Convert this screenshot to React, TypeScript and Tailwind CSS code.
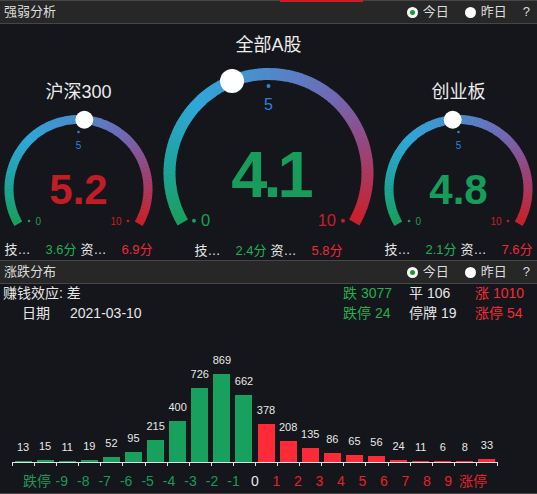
import React from 'react';

type Rgb = [number, number, number];

// arc colour stops, 0 = left end, 1 = right end
const STOPS: [number, Rgb][] = [
  [0, [0x18, 0xa0, 0x5a]],
  [0.15, [0x1f, 0xa3, 0xa0]],
  [0.3, [0x2e, 0xa8, 0xd8]],
  [0.5, [0x4d, 0x8b, 0xcc]],
  [0.68, [0x74, 0x66, 0xb2]],
  [0.82, [0x9a, 0x44, 0x78]],
  [1, [0xcc, 0x1f, 0x28]],
];

const colorAt = (t: number) => {
  for (let i = 1; i < STOPS.length; i++) {
    const [t1, c1] = STOPS[i];
    const [t0, c0] = STOPS[i - 1];
    if (t <= t1) {
      const k = (t - t0) / (t1 - t0);
      const c = c0.map((v, j) => Math.round(v + (c1[j] - v) * k));
      return `rgb(${c[0]},${c[1]},${c[2]})`;
    }
  }
  return 'rgb(204,31,40)';
};

const polar = (cx: number, cy: number, r: number, deg: number) => {
  const rad = (deg * Math.PI) / 180;
  return [cx + r * Math.cos(rad), cy - r * Math.sin(rad)];
};

const SMALL = {
  r: 69.5, sw: 9, knobR: 9, valueSize: 42, valueDy: 15, valueSpacing: 0,
  tickDot: 57, tickDotR: 1.3, tickTextDy: -40, tickFont: 10,
  endFont: 10, endDotX: 49.5, endDotDy: 32, endTextX: 43, endTextDy: 35.5,
};
const BIG = {
  r: 99, sw: 12, knobR: 12, valueSize: 65, valueDy: 23.5, valueSpacing: -4,
  tickDot: 87, tickDotR: 2, tickTextDy: -63, tickFont: 16,
  endFont: 16.5, endDotX: 74.5, endDotDy: 47.7, endTextX: 67.5, endTextDy: 53,
};

interface GaugeProps {
  width: number;
  height: number;
  cy: number;
  value: number;
  big?: boolean;
}

const Gauge: React.FC<GaugeProps> = ({ width, height, cy, value, big }) => {
  const g = big ? BIG : SMALL;
  const cx = width / 2;
  const N = 90;
  const segs = [];
  for (let i = 0; i < N; i++) {
    const a0 = 210 - (240 * i) / N;
    const a1 = 210 - (240 * (i + 1)) / N - (i < N - 1 ? 0.4 : 0);
    const [x0, y0] = polar(cx, cy, g.r, a0);
    const [x1, y1] = polar(cx, cy, g.r, a1);
    segs.push(
      <path
        key={i}
        d={`M${x0} ${y0} A${g.r} ${g.r} 0 0 1 ${x1} ${y1}`}
        stroke={colorAt((i + 0.5) / N)}
        strokeWidth={g.sw}
        fill="none"
      />
    );
  }
  const [kx, ky] = polar(cx, cy, g.r, 210 - 24 * value);
  const valueColor = value > 5 ? '#c21c26' : '#179c5c';

  return (
    <svg width={width} height={height} className="block shrink-0">
      {segs}
      <circle cx={kx} cy={ky} r={g.knobR} fill="#ffffff" />
      <circle cx={cx} cy={cy - g.tickDot} r={g.tickDotR} fill="#2b83e0" />
      <text x={cx} y={cy + g.tickTextDy} fontSize={g.tickFont} fill="#2b83e0" textAnchor="middle">5</text>
      <circle cx={cx - g.endDotX} cy={cy + g.endDotDy} r={g.tickDotR} fill="#17a058" />
      <text x={cx - g.endTextX} y={cy + g.endTextDy} fontSize={g.endFont} fill="#17a058">0</text>
      <circle cx={cx + g.endDotX} cy={cy + g.endDotDy} r={g.tickDotR} fill="#c81e28" />
      <text x={cx + g.endTextX} y={cy + g.endTextDy} fontSize={g.endFont} fill="#c81e28" textAnchor="end">10</text>
      <text
        x={cx - g.valueSpacing / 2}
        y={cy + g.valueDy}
        fontSize={g.valueSize}
        fontWeight="bold"
        letterSpacing={g.valueSpacing}
        fill={valueColor}
        textAnchor="middle"
      >
        {value.toFixed(1)}
      </text>
    </svg>
  );
};

const Scores: React.FC<{ tech: string; fund: string }> = ({ tech, fund }) => (
  <div className="w-[148px] mx-auto mt-[1px] flex gap-[4px] h-[20px] items-center text-[13px] shrink-0">
    <div className="flex-1 flex justify-between">
      <span className="text-[#e6e6e6]">技…</span>
      <span className="text-[#1fb055]">{tech}分</span>
    </div>
    <div className="flex-1 flex justify-between">
      <span className="text-[#e6e6e6]">资…</span>
      <span className="text-[#f0283a]">{fund}分</span>
    </div>
  </div>
);

const Radio: React.FC<{ checked?: boolean; label: string }> = ({ checked, label }) => (
  <div className="flex items-center gap-[5px]">
    <div className="w-[11px] h-[11px] rounded-full bg-white flex items-center justify-center">
      {checked && <div className="w-[5px] h-[5px] rounded-full bg-[#1a9a30]" />}
    </div>
    <span>{label}</span>
  </div>
);

const PanelHeader: React.FC<{ title: string; children?: React.ReactNode }> = ({ title, children }) => (
  <div className="relative h-[24px] shrink-0 bg-[#272727] border-y border-[#464646] flex items-center justify-between pl-[4px] pr-[7px] text-[13px] text-[#dcdcdc]">
    {children}
    <span>{title}</span>
    <div className="flex items-center gap-[16px]">
      <Radio checked label="今日" />
      <Radio label="昨日" />
      <span>?</span>
    </div>
  </div>
);

const BARS = [13, 15, 11, 19, 52, 95, 215, 400, 726, 869, 662, 378, 208, 135, 86, 65, 56, 24, 11, 6, 8, 33];
const LABELS = ['跌停', '-9', '-8', '-7', '-6', '-5', '-4', '-3', '-2', '-1', '0', '1', '2', '3', '4', '5', '6', '7', '8', '9', '涨停'];

export default function App() {
  return (
    <div className="w-[537px] h-[494px] overflow-hidden bg-[#14161b] flex flex-col font-['Liberation_Sans','Noto_Sans_CJK_SC',sans-serif]">
      <PanelHeader title="强弱分析">
        <div className="absolute left-[280px] top-[-1px] w-[83px] h-[2px] bg-[#c81e24]" />
      </PanelHeader>

      {/* gauges */}
      <div className="h-[236px] shrink-0 flex">
        <div className="w-[157px] flex flex-col">
          <div className="mt-[56px] h-[24px] leading-[24px] text-center text-[18px] text-[#ececec]">沪深300</div>
          <Gauge width={157} height={135} cy={85} value={5.2} />
          <Scores tech="3.6" fund="6.9" />
        </div>
        <div className="w-[223px] flex flex-col">
          <div className="mt-[9px] h-[24px] leading-[24px] text-center text-[18px] text-[#ececec]">全部A股</div>
          <Gauge width={223} height={183} cy={116} value={4.1} big />
          <Scores tech="2.4" fund="5.8" />
        </div>
        <div className="w-[157px] flex flex-col">
          <div className="mt-[56px] h-[24px] leading-[24px] text-center text-[18px] text-[#ececec]">创业板</div>
          <Gauge width={157} height={135} cy={85} value={4.8} />
          <Scores tech="2.1" fund="7.6" />
        </div>
      </div>

      <PanelHeader title="涨跌分布" />

      {/* stats */}
      <div className="h-[42px] shrink-0 flex text-[14px] text-[#e6e6e6]">
        <div className="flex-1 pl-[3px]">
          <div className="h-[19px] leading-[19px]">赚钱效应: 差</div>
          <div className="h-[20px] leading-[20px] flex">
            <span className="pl-[19px] w-[67px]">日期</span>
            <span>2021-03-10</span>
          </div>
        </div>
        <div className="w-[194px] shrink-0 grid grid-cols-[66px_66px_1fr] grid-rows-[19px_20px] leading-[19px]">
          <span className="text-[#22b04f]">跌 3077</span>
          <span>平 106</span>
          <span className="text-[#f02d37]">涨 1010</span>
          <span className="text-[#22b04f] leading-[20px]">跌停 24</span>
          <span className="leading-[20px]">停牌 19</span>
          <span className="text-[#f02d37] leading-[20px]">涨停 54</span>
        </div>
      </div>

      {/* distribution chart */}
      <div className="flex-1 flex flex-col justify-end border-b border-[#4a4a4a] pb-[3px]">
        <div className="ml-[12px] w-[486px] grid grid-cols-[repeat(22,1fr)] items-end">
          {BARS.map((v, i) => (
            <div key={i} className="flex flex-col items-center justify-end">
              <span className="text-[11px] leading-[13px] mb-[7px] text-[#e8e8e8]">{v}</span>
              <div
                className={`w-[17px] ${i <= 10 ? 'bg-[#18a05e]' : 'bg-[#fe2a38]'}`}
                style={{ height: `${v * 0.1013}px` }}
              />
            </div>
          ))}
        </div>
        <div className="ml-[12px] w-[486px] grid grid-cols-[repeat(22,1fr)]">
          {BARS.map((_, i) => (
            <div
              key={i}
              className={`h-[4px] border-t border-l border-[#e0e0e0] ${i === BARS.length - 1 ? 'border-r' : ''}`}
            />
          ))}
        </div>
        <div className="mt-[6px] ml-[23px] w-[464px] grid grid-cols-[repeat(21,1fr)] h-[18px] leading-[18px] text-[14px]">
          {LABELS.map((l, i) => (
            <span
              key={i}
              className={`text-center whitespace-nowrap ${i < 10 ? 'text-[#1a9a5a]' : i === 10 ? 'text-[#e8e8e8]' : 'text-[#e8202c]'}`}
            >
              {l}
            </span>
          ))}
        </div>
      </div>
    </div>
  );
}
